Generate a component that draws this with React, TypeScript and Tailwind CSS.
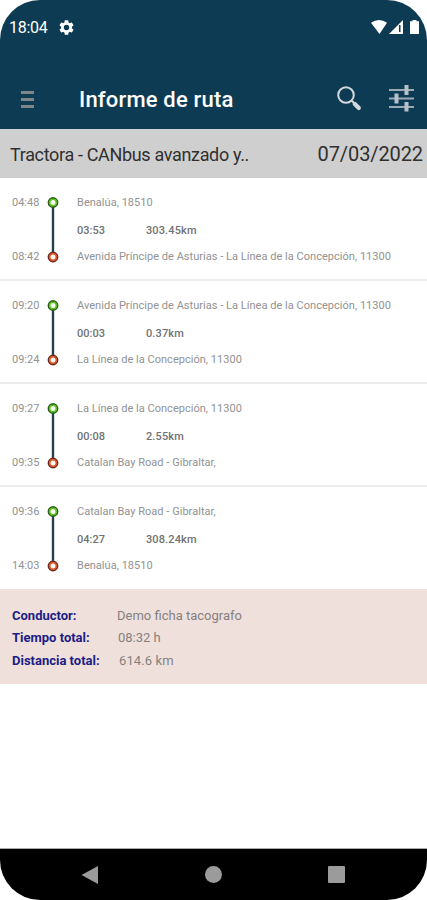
type Leg = {
  start: string;
  end: string;
  from: string;
  to: string;
  duration: string;
  distance: string;
};

const LINEA = "La Línea de la Concepción, 11300";
const AVENIDA = "Avenida Príncipe de Asturias - La Línea de la Concepción, 11300";

const legs: Leg[] = [
  { start: "04:48", end: "08:42", from: "Benalúa, 18510", to: AVENIDA, duration: "03:53", distance: "303.45km" },
  { start: "09:20", end: "09:24", from: AVENIDA, to: LINEA, duration: "00:03", distance: "0.37km" },
  { start: "09:27", end: "09:35", from: LINEA, to: "Catalan Bay Road - Gibraltar,", duration: "00:08", distance: "2.55km" },
  { start: "09:36", end: "14:03", from: "Catalan Bay Road - Gibraltar,", to: "Benalúa, 18510", duration: "04:27", distance: "308.24km" },
];

function StatusBar() {
  return (
    <div className="flex h-[56px] items-start justify-between pt-[18px] pr-[7px] pl-[9px] text-white">
      <div className="flex items-center gap-[12px]">
        <span className="text-[16px] leading-[20px] tracking-[-0.3px]">18:04</span>
        <svg viewBox="2 2 20 20" className="mb-[2px] h-[15px] w-[15px]" fill="currentColor">
          <path d="M19.14 12.94c.04-.3.06-.61.06-.94s-.02-.64-.07-.94l2.03-1.58a.49.49 0 0 0 .12-.61l-1.92-3.32a.49.49 0 0 0-.59-.22l-2.39.96a7 7 0 0 0-1.62-.94l-.36-2.54a.48.48 0 0 0-.48-.41h-3.84c-.24 0-.43.17-.47.41l-.36 2.54c-.59.24-1.13.57-1.62.94l-2.39-.96a.48.48 0 0 0-.59.22L2.74 8.87c-.12.21-.08.47.12.61l2.03 1.58c-.05.3-.09.63-.09.94s.02.64.07.94l-2.03 1.58a.49.49 0 0 0-.12.61l1.92 3.32c.12.22.37.29.59.22l2.39-.96c.5.38 1.03.7 1.62.94l.36 2.54c.05.24.24.41.48.41h3.84c.24 0 .44-.17.47-.41l.36-2.54a6.8 6.8 0 0 0 1.62-.94l2.39.96c.22.08.47 0 .59-.22l1.92-3.32a.48.48 0 0 0-.12-.61zM12 15.6a3.6 3.6 0 1 1 0-7.2 3.6 3.6 0 0 1 0 7.2z" />
        </svg>
      </div>
      <div className="mt-[1px] flex">
        <svg width="49" height="16" viewBox="0 0 49 16" fill="currentColor">
          <path d="M0 3.800Q8-1.800 16 3.800L8.500 15z" />
          <path d="M18 15 32 1v14z" />
          <path d="M28 6h1.500v7H28z" fill="#0e3b54" />
          <path d="M41.500 1h4v1.300H48V15h-9V2.300h2.500z" />
        </svg>
      </div>
    </div>
  );
}

function AppBar() {
  return (
    <div className="flex h-[73px] items-center pt-[13px] pr-[12px] pb-[2px] pl-[21px]">
      <div className="mt-[2px] flex w-[58px] flex-col gap-[4px]">
        <span className="h-[3px] w-[13px] bg-[#7f8589]" />
        <span className="h-[3px] w-[13px] bg-[#7f8589]" />
        <span className="h-[3px] w-[13px] bg-[#7f8589]" />
      </div>
      <h1 className="mt-[4px] flex-1 text-[22px] leading-[28px] font-medium tracking-[0.18px] whitespace-nowrap text-white">
        Informe de ruta
      </h1>
      <svg width="27" height="27" viewBox="0 0 27 27" className="mr-[25px]" fill="none" stroke="#d3d8dc" strokeLinecap="round">
        <circle cx="10" cy="10" r="7.800" strokeWidth="2" />
        <path d="m15.800 15.800 2.200 2.200" strokeWidth="2" />
        <path d="m18.800 19 4 4" strokeWidth="4.200" />
      </svg>
      <svg width="27" height="28" viewBox="0 0 27 28">
        <path d="M1 6h25M1 14.500h25M1 23h25" stroke="#9caab3" strokeWidth="2" />
        <path d="M16.500 1h4v10h-4zM6.500 9.500h4v10h-4zM16.500 18h4v9.500h-4z" fill="#b6c0c7" />
      </svg>
    </div>
  );
}

function Track() {
  return (
    <svg width="12" height="67" viewBox="0 0 12 67" className="shrink-0">
      <path d="M6 6v55" stroke="#28424f" strokeWidth="2.400" />
      <circle cx="6" cy="6.500" r="4.500" fill="#f7fff0" stroke="#285f18" strokeWidth="1.800" />
      <circle cx="6" cy="6.500" r="3.300" fill="#f7fff0" stroke="#5cc01c" strokeWidth="1.600" />
      <circle cx="6" cy="61" r="4.500" fill="#fff" stroke="#6d2a1c" strokeWidth="1.800" />
      <circle cx="6" cy="61" r="3.300" fill="#fff7f2" stroke="#dc5426" strokeWidth="1.600" />
    </svg>
  );
}

function RouteLeg({ leg }: { leg: Leg }) {
  return (
    <li className="flex h-[103px] border-b-2 border-[#ececec] pt-[18px] pl-[12px] text-[11px] leading-[12px] text-[#929292] last:h-[102px] last:border-b-0">
      <div className="mt-px flex h-[66px] w-[35px] flex-col justify-between">
        <span>{leg.start}</span>
        <span>{leg.end}</span>
      </div>
      <Track />
      <div className="mt-px ml-[18px] flex h-[66px] flex-col justify-between tracking-[0.03px] whitespace-nowrap">
        <span>{leg.from}</span>
        <div className="mt-px flex font-medium text-[#727272]">
          <span className="w-[69px]">{leg.duration}</span>
          <span className="tracking-[0.12px]">{leg.distance}</span>
        </div>
        <span>{leg.to}</span>
      </div>
    </li>
  );
}

function Summary() {
  return (
    <dl className="flex h-[95px] flex-col bg-[#f0e0dc] pt-[16px] pl-[12px] text-[13px] leading-[22px] text-[#858080]">
      <div className="flex">
        <dt className="w-[105px] font-bold text-[#1c1c85]">Conductor:</dt>
        <dd>Demo ficha tacografo</dd>
      </div>
      <div className="flex">
        <dt className="w-[106px] font-bold text-[#1c1c85]">Tiempo total:</dt>
        <dd>08:32 h</dd>
      </div>
      <div className="mt-px flex">
        <dt className="w-[107px] font-bold text-[#1c1c85]">Distancia total:</dt>
        <dd className="tracking-[0.1px]">614.6 km</dd>
      </div>
    </dl>
  );
}

function NavBar() {
  return (
    <nav className="mt-auto flex h-[52px] items-center justify-between border-t border-[#aaa] bg-black pr-[82px] pl-[81px]">
      <svg width="18" height="20" viewBox="0 0 18 20" fill="#9b9b9b">
        <path d="M.5 10 17 1v18z" />
      </svg>
      <span className="h-[17px] w-[17px] rounded-full bg-[#9b9b9b]" />
      <span className="h-[17px] w-[17px] rounded-[1px] bg-[#9b9b9b]" />
    </nav>
  );
}

export default function App() {
  return (
    <div className="h-[900px] w-[427px] bg-white">
      <div className="flex h-full flex-col overflow-hidden rounded-[40px] bg-white font-[Roboto,sans-serif]">
        <header className="h-[129px] shrink-0 bg-[#0e3b54]">
          <StatusBar />
          <AppBar />
        </header>
        <div className="flex h-[49px] shrink-0 items-center justify-between bg-[#cfcfcf] pt-px pr-[4px] pl-[10px] text-[#303030]">
          <span className="text-[18px] tracking-[-0.34px]">Tractora - CANbus avanzado y..</span>
          <span className="text-[20px] tracking-[-0.1px]">07/03/2022</span>
        </div>
        <ul className="shrink-0">
          {legs.map((leg) => (
            <RouteLeg key={leg.start} leg={leg} />
          ))}
        </ul>
        <Summary />
        <NavBar />
      </div>
    </div>
  );
}
